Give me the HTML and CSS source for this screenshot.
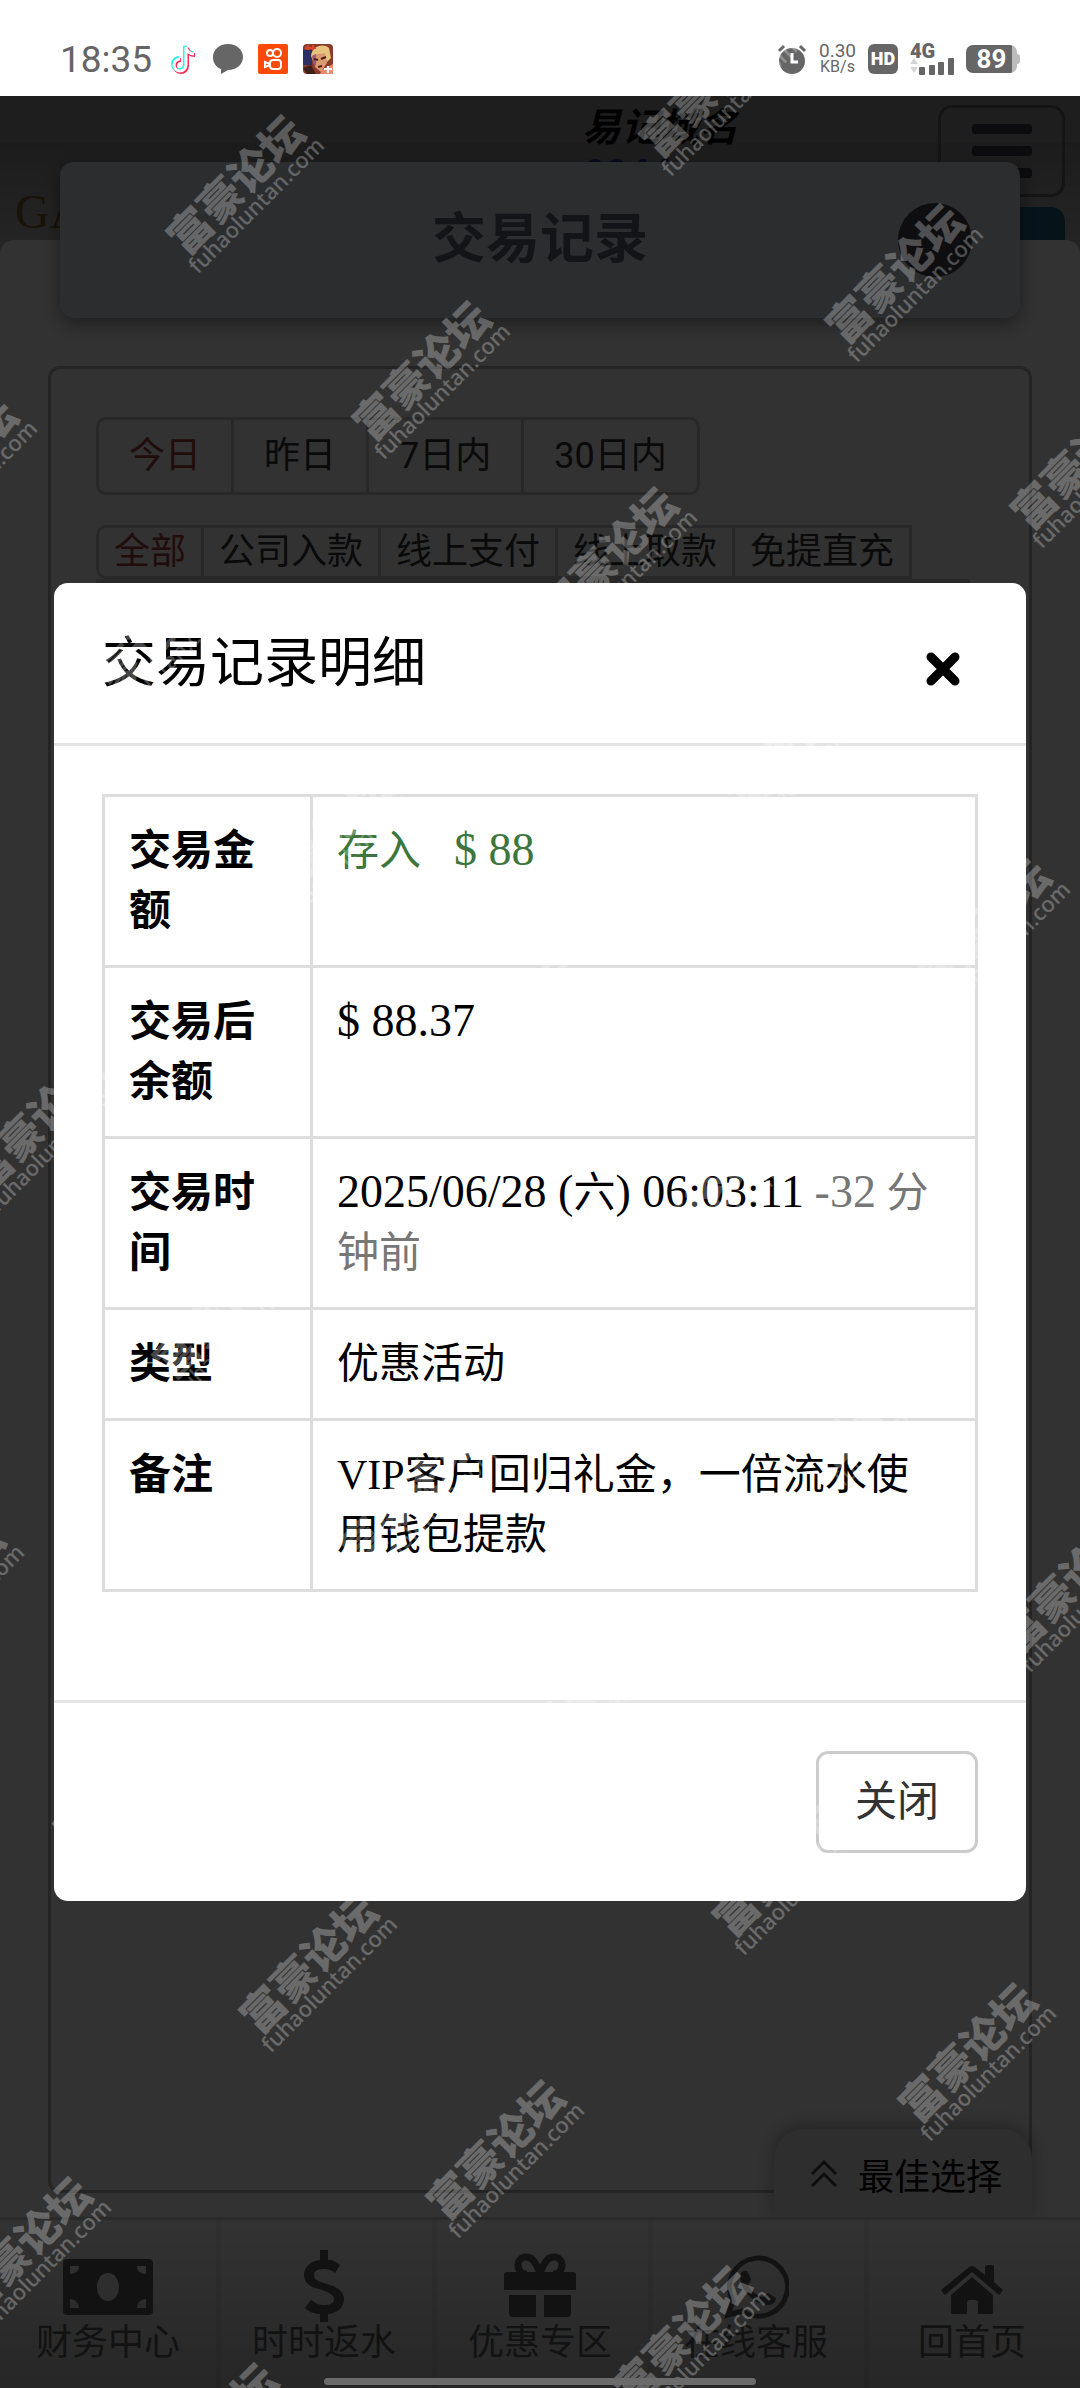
FILE: index.html
```
<!DOCTYPE html>
<html lang="zh-CN">
<head>
    <meta charset="UTF-8">
    <meta name="viewport" content="width=device-width, initial-scale=1.0">
    <title>交易记录</title>
    <link rel="stylesheet" href="styles.css">
</head>
<body>
    <div class="status-bar">
        <span class="clock">18:35</span>
        <svg class="status-icon" viewBox="0 0 30 30">
            <g fill="none" stroke-width="4">
                <path d="M11 14a6 6 0 1 0 6 7V2c1 5 4 7 8 7" stroke="#25f4ee"/>
                <path d="M13 16a6 6 0 1 0 6 6V4c1 5 4 7 8 7" stroke="#fe2c55"/>
                <path d="M12 15a6 6 0 1 0 6 6V3c1 5 4 7 8 7" stroke="#fff" stroke-width="3"/>
            </g>
        </svg>
        <svg class="status-icon" viewBox="0 0 30 30">
            <path d="M15 0C6 0 0 6 0 13c0 6 3 10 8 12v5l7-4c9 0 15-6 15-13S24 0 15 0z" fill="#666"/>
        </svg>
        <svg class="status-icon" viewBox="0 0 30 30">
            <rect width="30" height="30" rx="2" fill="#ff4906"/>
            <g fill="none" stroke="#fff" stroke-width="2">
                <circle cx="12" cy="9" r="3"/>
                <circle cx="19" cy="9" r="4"/>
                <rect x="12" y="16" width="11" height="9" rx="3"/>
                <path d="M12 20l-5-2v5l5-2"/>
            </g>
        </svg>
        <svg class="status-icon" viewBox="0 0 30 30">
            <rect width="30" height="30" rx="4" fill="#8a3a2c"/>
            <path d="M0 6h9v15H0z" fill="#2c2f63"/>
            <path d="M8 12C9 2 20-1 26 4l2 10-4 4-3-8-9 1-2 6z" fill="#e6c47c"/>
            <path d="M10 11l12-2 2 10-6 9-6-5z" fill="#dc9a73"/>
            <path d="M9 12l4-2v12l-3-3z" fill="#9c5a78"/>
            <path d="M11 15l4 1M18 15l5-2M15 23l4-1" stroke="#4a2018" stroke-width="2"/>
            <path d="M0 24l8-3 5 9H4z" fill="#3d1f1a"/>
            <path d="M19 26l11-6v10H17z" fill="#e98b6d"/>
            <path d="M25 22v7M21 25h8" stroke="#fff" stroke-width="2"/>
            <path d="M2 4h11M5 1v5M10 1v5" stroke="#d8432f" stroke-width="2"/>
        </svg>
        <div class="status-right">
            <svg class="status-icon" viewBox="0 0 30 30">
                <circle cx="15" cy="17" r="13" fill="#666"/>
                <path d="M2 7l5-5M28 7l-5-5" stroke="#666" stroke-width="3"/>
                <path d="M15 9v9h6" fill="none" stroke="#fff" stroke-width="3"/>
            </svg>
            <span class="speed"><b>0.30</b><span>KB/s</span></span>
            <span class="hd">HD</span>
            <span class="network">
                <span class="network-type">4G</span>
                <svg width="44" height="17" viewBox="0 0 44 17">
                    <path d="M0 6l4-6 4 6zM0 9l4 6 4-6z" fill="#d5d5d5"/>
                    <g fill="#666">
                        <rect x="9" y="9" width="6" height="8" rx="1"/>
                        <rect x="19" y="7" width="6" height="10" rx="1"/>
                        <rect x="28" y="4" width="6" height="13" rx="1"/>
                        <rect x="38" y="0" width="6" height="17" rx="1"/>
                    </g>
                </svg>
            </span>
            <span class="battery">89</span>
        </div>
    </div>

    <div class="app">
        <header class="site-header">
            <a href="#" class="logo"><span>GA</span><small>NG</small></a>
            <div class="domain"><span>易记域名</span><b>9944.com</b></div>
            <div class="header-side">
                <button class="menu-btn" aria-label="菜单"><i></i><i></i><i></i></button>
                <a href="#" class="account-btn" aria-label="账户"></a>
            </div>
        </header>

        <div class="page-title">
            <h1>交易记录</h1>
            <button class="title-close" aria-label="关闭页面"></button>
        </div>

        <main class="content">
            <section class="record-card">
                <div class="btn-group">
                    <button class="active">今日</button>
                    <button>昨日</button>
                    <button>7日内</button>
                    <button>30日内</button>
                </div>
                <div class="btn-group btn-group-small">
                    <button class="active">全部</button>
                    <button>公司入款</button>
                    <button>线上支付</button>
                    <button>线上取款</button>
                    <button>免提直充</button>
                </div>
                <div class="more-types"></div>
            </section>
        </main>

        <a href="#" class="best-choice">
            <svg width="28" height="28" viewBox="0 0 28 28" fill="none" stroke="#464646" stroke-width="3">
                <path d="M2 14L14 2l12 12M2 26l12-12 12 12"/>
            </svg>
            最佳选择
        </a>

        <nav class="bottom-nav">
            <a href="#">
                <svg width="90" height="72" viewBox="0 0 90 72">
                    <path fill-rule="evenodd" d="M4 9h82a4 4 0 0 1 4 4v48a4 4 0 0 1-4 4H4a4 4 0 0 1-4-4V13a4 4 0 0 1 4-4zM45 23c-6 0-11 6-11 14s5 14 11 14 11-6 11-14-5-14-11-14zM7 16v8c5 0 9-3 9-8zM83 16v8c-5 0-9-3-9-8zM7 58v-9c5 0 9 4 9 9zM83 58v-9c-5 0-9 4-9 9z"/>
                </svg>
                财务中心
            </a>
            <a href="#">
                <svg width="42" height="72" viewBox="0 0 42 72">
                    <path d="M17 0h8v10c5 0 9 2 12 5l-5 8c-4-3-7-4-11-4-6 0-10 2-10 6 0 5 4 6 13 9 10 3 17 7 17 15 0 8-6 14-16 15v8h-8v-8C11 64 6 62 2 58l6-8c4 3 8 5 13 5 6 0 10-2 10-6s-4-6-12-9C8 37 1 34 1 25 1 17 7 11 17 10z"/>
                </svg>
                时时返水
            </a>
            <a href="#">
                <svg width="72" height="72" viewBox="0 0 72 72">
                    <path d="M3 22h66a3 3 0 0 1 3 3v15H0V25a3 3 0 0 1 3-3zM5 45h27v22H9a4 4 0 0 1-4-4zM40 45h27v18a4 4 0 0 1-4 4H40z"/>
                    <path d="M36 23C31 10 27 7 22 7c-5 0-8 4-8 8 0 6 4 9 9 9M36 23C41 10 45 7 50 7c5 0 8 4 8 8 0 6-4 9-9 9" fill="none" stroke="#5a5c62" stroke-width="7"/>
                </svg>
                优惠专区
            </a>
            <a href="#">
                <svg width="66" height="72" viewBox="0 0 66 72">
                    <path d="M10 51A29 29 0 1 1 19 61L5 65z" fill="none" stroke="#5a5c62" stroke-width="5"/>
                    <path d="M17 25c1-4 4-5 7-4l4 8c0 3-3 4-3 6 3 6 8 10 14 12 3 0 4-4 6-4l8 5c0 5-5 8-11 7C29 52 17 40 17 25z"/>
                </svg>
                在线客服
            </a>
            <a href="#">
                <svg width="62" height="72" viewBox="0 0 62 72">
                    <path d="M31 16c2 0 3 1 4 2l9 7V17c0-1 1-2 2-2h5c1 0 2 1 2 2v15l9 8-4 5L31 22 4 45l-4-5 27-22c1-1 2-2 4-2zM31 27l21 18v17c0 1-1 2-2 2H37V53c0-2-1-3-3-3h-5c-2 0-3 1-3 3v11H12c-1 0-2-1-2-2V45z"/>
                </svg>
                回首页
            </a>
        </nav>

        <div class="backdrop">
            <div class="modal" role="dialog" aria-labelledby="modal-title">
                <div class="modal-header">
                    <h2 id="modal-title">交易记录明细</h2>
                    <button class="modal-close" aria-label="关闭窗口">
                        <svg width="34" height="34" viewBox="0 0 34 34">
                            <path d="M5 5l24 24M29 5L5 29" stroke="#000" stroke-width="9" stroke-linecap="round"/>
                        </svg>
                    </button>
                </div>
                <div class="modal-body">
                    <table class="detail">
                        <tr>
                            <th>交易金额</th>
                            <td class="income">存入<span class="num amount">$ 88</span></td>
                        </tr>
                        <tr>
                            <th>交易后余额</th>
                            <td><span class="num">$ 88.37</span></td>
                        </tr>
                        <tr>
                            <th>交易时间</th>
                            <td><span class="num">2025/06/28 (</span>六<span class="num">) 06:03:11</span> <span class="ago"><span class="num">-32</span> 分钟前</span></td>
                        </tr>
                        <tr>
                            <th>类型</th>
                            <td>优惠活动</td>
                        </tr>
                        <tr>
                            <th>备注</th>
                            <td>VIP客户回归礼金，一倍流水使用钱包提款</td>
                        </tr>
                    </table>
                </div>
                <div class="modal-footer">
                    <button class="btn">关闭</button>
                </div>
            </div>
        </div>
    </div>

    <!-- forum watermark over the whole screen -->
    <svg class="watermark" aria-hidden="true">
        <defs>
            <g id="mark">
                <g transform="rotate(-45)" text-anchor="middle">
                    <text class="mark-name" y="7">富豪论坛</text>
                    <text class="mark-url" y="28">fuhaoluntan.com</text>
                </g>
            </g>
        </defs>
        <use href="#mark" x="242" y="191"/>
        <use href="#mark" x="428" y="377"/>
        <use href="#mark" x="615" y="563"/>
        <use href="#mark" x="801" y="749"/>
        <use href="#mark" x="988" y="935"/>
        <use href="#mark" x="715" y="94"/>
        <use href="#mark" x="901" y="280"/>
        <use href="#mark" x="1086" y="466"/>
        <use href="#mark" x="-45" y="474"/>
        <use href="#mark" x="142" y="660"/>
        <use href="#mark" x="328" y="846"/>
        <use href="#mark" x="515" y="1032"/>
        <use href="#mark" x="701" y="1218"/>
        <use href="#mark" x="888" y="1404"/>
        <use href="#mark" x="1074" y="1590"/>
        <use href="#mark" x="42" y="1129"/>
        <use href="#mark" x="228" y="1315"/>
        <use href="#mark" x="415" y="1501"/>
        <use href="#mark" x="601" y="1687"/>
        <use href="#mark" x="788" y="1873"/>
        <use href="#mark" x="974" y="2059"/>
        <use href="#mark" x="-58" y="1598"/>
        <use href="#mark" x="129" y="1784"/>
        <use href="#mark" x="315" y="1970"/>
        <use href="#mark" x="502" y="2156"/>
        <use href="#mark" x="688" y="2342"/>
        <use href="#mark" x="29" y="2253"/>
        <use href="#mark" x="215" y="2439"/>
    </svg>
    <div class="home-indicator"></div>
</body>
</html>
```
FILE: styles.css
```
* {
    box-sizing: border-box;
}

body {
    margin: 0;
    min-height: 100vh;
    display: flex;
    flex-direction: column;
    position: relative;
    overflow-x: hidden;
    font-family: Roboto, "Noto Sans CJK SC", sans-serif;
    font-size: 36px;
    color: #000;
    background: #333;
}

button {
    font: inherit;
    color: inherit;
    background: none;
    border: 0;
    padding: 0;
}

a {
    color: inherit;
    text-decoration: none;
}

/* phone status bar */
.status-bar {
    height: 96px;
    padding: 22px 60px 0;
    display: flex;
    align-items: center;
    gap: 15px;
    background: #fff;
    color: #666;
}

.clock {
    font-size: 37px;
    margin-right: 1px;
}

.status-icon {
    width: 30px;
    height: 30px;
}

.status-right {
    margin-left: auto;
    display: flex;
    align-items: center;
    gap: 12px;
}

.speed {
    display: flex;
    flex-direction: column;
    align-items: center;
    font-size: 16px;
    line-height: 16px;
}

.speed b {
    font-size: 19px;
    font-weight: normal;
}

.hd {
    width: 30px;
    height: 30px;
    border-radius: 6px;
    background: #666;
    color: #fff;
    font-size: 18px;
    font-weight: 900;
    line-height: 30px;
    text-align: center;
}

.network {
    display: flex;
    flex-direction: column;
}

.network-type {
    font-size: 20px;
    font-weight: 900;
    line-height: 14px;
}

.battery {
    position: relative;
    width: 51px;
    height: 28px;
    margin-right: 3px;
    border-radius: 7px;
    background: linear-gradient(90deg, #666 90%, #bbb 90%);
    color: #fff;
    font-size: 26px;
    font-weight: bold;
    line-height: 28px;
    text-align: center;
}

.battery::after {
    content: "";
    position: absolute;
    top: 9px;
    left: 100%;
    width: 3px;
    height: 10px;
    border-radius: 0 3px 3px 0;
    background: #bbb;
}

/* page behind the modal */
.app {
    flex: 1;
    display: flex;
    flex-direction: column;
    position: relative;
}

.site-header {
    height: 158px;
    padding: 9px 15px 0;
    display: flex;
    overflow: hidden;
    background: linear-gradient(#969696, #969696 30%, #8c8c8c 30%, #b9b9b9);
}

.logo {
    padding-top: 80px;
    font-family: "Liberation Serif", serif;
    font-size: 48px;
    line-height: 54px;
    color: #785a28;
}

.logo small {
    display: block;
    padding-left: 34px;
    font-size: 20px;
    line-height: 20px;
}

.domain {
    margin-left: auto;
    margin-right: 196px;
    width: 160px;
    font-size: 39px;
    font-style: italic;
    font-weight: bold;
    line-height: 46px;
    white-space: nowrap;
}

.domain b {
    display: block;
    color: #1e3c96;
}

.header-side {
    display: flex;
    flex-direction: column;
    gap: 10px;
    width: 127px;
}

.menu-btn {
    flex: none;
    height: 92px;
    display: flex;
    flex-direction: column;
    align-items: center;
    justify-content: center;
    gap: 12px;
    border: 3px solid #646464;
    border-radius: 14px;
}

.menu-btn i {
    width: 60px;
    height: 10px;
    border-radius: 3px;
    background: #3c3c46;
}

.account-btn {
    flex: none;
    height: 60px;
    border-radius: 14px;
    background: #1e6482;
}

.page-title {
    position: absolute;
    top: 66px;
    left: 60px;
    right: 60px;
    height: 156px;
    display: flex;
    align-items: center;
    justify-content: center;
    border-radius: 14px;
    background: #dce1eb;
    box-shadow: 0 6px 18px rgba(0, 0, 0, 0.4);
    color: #5f6473;
}

.page-title h1 {
    margin: 0;
    padding-bottom: 12px;
    font-size: 54px;
}

.title-close {
    position: absolute;
    right: 48px;
    width: 74px;
    height: 74px;
    border-radius: 50%;
    background: #464650;
}

.content {
    flex: 1;
    display: flex;
    margin-top: -14px;
    padding: 126px 48px 24px;
    border-radius: 14px 14px 0 0;
    background: #f8f8f8;
}

.record-card {
    flex: 1;
    padding: 48px 45px;
    border: 3px solid #b4b4b4;
    border-radius: 12px;
}

.btn-group {
    display: flex;
    width: max-content;
    margin-bottom: 30px;
    border: 3px solid #c8c8c8;
    border-radius: 10px;
    color: #323232;
}

.btn-group button {
    padding: 0 30px;
    line-height: 72px;
}

.btn-group button + button {
    border-left: 3px solid #c8c8c8;
}

.btn-group-small {
    margin-bottom: 0;
    border-radius: 10px 0 0 10px;
}

.btn-group-small button {
    padding: 0 15px;
    line-height: 48px;
}

.btn-group .active {
    color: #a53c3c;
}

.more-types {
    height: 30px;
    margin-right: 14px;
    background: #c8c8c8;
}

.best-choice {
    position: absolute;
    right: 48px;
    bottom: 169px;
    height: 90px;
    padding: 0 30px 0 36px;
    display: flex;
    align-items: center;
    gap: 20px;
    border-radius: 30px 30px 0 0;
    background: #e6e6e6;
    box-shadow: 0 -3px 18px rgba(0, 0, 0, 0.3);
}

.bottom-nav {
    position: relative;
    height: 171px;
    display: grid;
    grid-template-columns: repeat(5, 1fr);
    border-top: 3px solid #d2d2d2;
    background: linear-gradient(#fafafa, #c0c0c0);
}

.bottom-nav a {
    padding-top: 30px;
    display: flex;
    flex-direction: column;
    align-items: center;
    color: #5a5c62;
    line-height: 42px;
}

.bottom-nav a + a {
    box-shadow: inset 5px 0 rgba(0, 0, 0, 0.06);
}

.bottom-nav svg {
    fill: #5a5c62;
}

/* transaction details modal */
.backdrop {
    position: absolute;
    inset: 0;
    display: flex;
    align-items: center;
    justify-content: center;
    background: rgba(0, 0, 0, 0.8);
}

.modal {
    width: 90%;
    border-radius: 14px;
    background: #fff;
    font-family: "Liberation Serif", "Noto Sans CJK SC", serif;
    font-size: 42px;
    line-height: 60px;
}

.modal-header {
    padding: 42px 66px 39px 48px;
    display: flex;
    align-items: center;
    justify-content: space-between;
    border-bottom: 3px solid #e5e5e5;
}

.modal-header h2 {
    margin: 0;
    font-size: 54px;
    font-weight: normal;
    line-height: 79px;
}

.modal-close svg {
    display: block;
    margin-top: 8px;
}

.modal-body {
    padding: 48px 48px 108px;
}

.detail {
    width: 100%;
    border-collapse: collapse;
    table-layout: fixed;
}

.detail th,
.detail td {
    padding: 24px;
    border: 3px solid #ddd;
    text-align: left;
    vertical-align: top;
}

.detail td {
    padding-right: 36px;
}

.detail th {
    width: 208px;
}

.num {
    font-size: 46px;
    line-height: 46px;
}

.income {
    color: #3c763d;
}

.amount {
    margin-left: 33px;
}

.ago {
    color: #777;
}

.modal-footer {
    padding: 48px;
    border-top: 3px solid #e5e5e5;
    text-align: right;
}

.btn {
    display: inline-block;
    vertical-align: top;
    padding: 18px 36px;
    border: 3px solid #ccc;
    border-radius: 12px;
    color: #333;
}

.watermark {
    position: absolute;
    inset: 0;
    width: 100%;
    height: 100%;
    fill: #fff;
    opacity: 0.27;
    pointer-events: none;
}

.mark-name {
    font-family: "Noto Sans CJK SC", sans-serif;
    font-size: 43px;
    font-weight: 900;
}

.mark-url {
    font-family: "Noto Sans", sans-serif;
    font-size: 22px;
    font-weight: 500;
}

.home-indicator {
    position: absolute;
    left: 30%;
    right: 30%;
    bottom: 3px;
    height: 7px;
    border-radius: 4px;
    background: #6b6b6b;
}
```
